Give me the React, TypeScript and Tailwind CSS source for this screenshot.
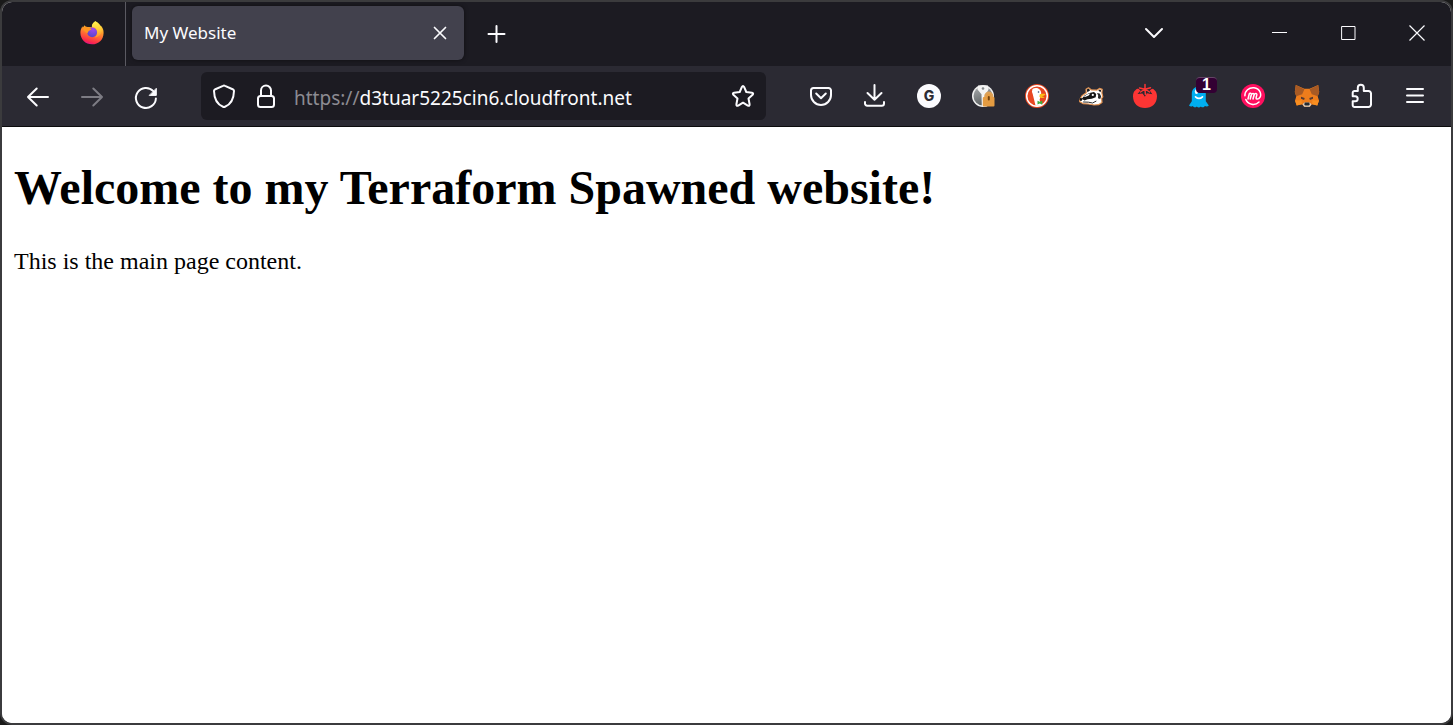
import { useState } from "react";
import type { ReactNode } from "react";

function Glyph({ children, className = "" }: { children: ReactNode; className?: string }) {
  return (
    <svg
      viewBox="0 0 32 32"
      aria-hidden="true"
      fill="none"
      stroke="currentColor"
      strokeWidth="2"
      strokeLinecap="round"
      strokeLinejoin="round"
      className={`size-8 shrink-0 ${className}`}
    >
      {children}
    </svg>
  );
}

function ToolButton({ label, disabled, children }: { label: string; disabled?: boolean; children: ReactNode }) {
  return (
    <button
      type="button"
      aria-label={label}
      disabled={disabled}
      className="relative flex h-12 w-[54px] shrink-0 items-center justify-center text-[#fbfbfe] disabled:text-[#7d7c84]"
    >
      {children}
    </button>
  );
}

function FirefoxLogo() {
  return (
    <Glyph>
      <defs>
        <linearGradient id="fx-body" x1="0.7" y1="0.05" x2="0.4" y2="1">
          <stop offset="0" stopColor="#ffe23e" />
          <stop offset="0.35" stopColor="#ffa22b" />
          <stop offset="0.65" stopColor="#ff5f36" />
          <stop offset="0.9" stopColor="#f9254f" />
          <stop offset="1" stopColor="#e01587" />
        </linearGradient>
        <linearGradient id="fx-flame" x1="0.4" y1="0" x2="0.5" y2="1">
          <stop offset="0" stopColor="#fff44f" />
          <stop offset="0.5" stopColor="#ffcf38" />
          <stop offset="1" stopColor="#ff8d2e" />
        </linearGradient>
        <radialGradient id="fx-globe" cx="0.6" cy="0.15" r="0.9">
          <stop offset="0" stopColor="#a048f0" />
          <stop offset="1" stopColor="#5047c8" />
        </radialGradient>
      </defs>
      <g stroke="none">
        <path
          d="M19.300 3.200c2.200 1.300 3.700 3 4.700 5l.8-.6c2 2.200 2.900 4.600 2.800 7.300C27.400 21.800 22.600 26.300 16 26.300S4.400 21.500 4.400 14.800c0-2.800.8-4.700 2.100-6.600l.3 1.500 1.800-2.500c.6 1.300 1.500 1.800 3 1.800l4.400.3c-.3-2.400 1-4.700 3.300-6.100Z"
          fill="url(#fx-body)"
        />
        <circle cx="16.200" cy="14.400" r="4.900" fill="url(#fx-globe)" />
        <path d="M19.300 3.200c-2.300 1.400-3.600 3.500-3.500 5.500 3.200.2 5 1.600 5.300 4.300.4 3-.7 5.200-2.600 6.600 4.500-.4 8.100-4.400 7.300-8.600-.8-3.600-3.200-6.300-6.500-7.800Z" fill="url(#fx-flame)" />
        <path d="M6.500 9.900c1.500-1.100 3.500-1.200 5.100-.9 1.200.6 2.600 1.500 3.900 1.800.2 1.400-1.800 1.500-2.600 2-.8.700-.5 1.800-1.500 2.200-2-.1-3.800-3.100-4.900-5.100Z" fill="#ff9620" />
      </g>
    </Glyph>
  );
}

function TabStrip() {
  return (
    <header className="flex h-16 items-stretch bg-[#1c1b22] text-[#fbfbfe]">
      <div className="ml-[57px] flex w-[67px] items-center justify-center border-r border-[#5b5a62]">
        <button type="button" aria-label="Pinned tab" className="flex">
          <FirefoxLogo />
        </button>
      </div>
      <div className="mt-1 ml-1.5 flex h-[54px] w-[332px] items-center rounded-md bg-[#42414d] pr-2 pl-3 shadow-[0_0_4px_rgba(0,0,0,0.5)]">
        <span className="flex-1 truncate text-[17px] leading-7">My Website</span>
        <button type="button" aria-label="Close tab" className="flex">
          <Glyph>
            <path d="M10.500 10.500l11 11m0-11l-11 11" strokeWidth="1.700" />
          </Glyph>
        </button>
      </div>
      <button type="button" aria-label="New tab" className="ml-4 flex items-center">
        <Glyph>
          <path d="M8.500 16h16m-8-8v16" />
        </Glyph>
      </button>
      <button type="button" aria-label="List all tabs" className="mr-[74px] ml-auto flex items-center">
        <Glyph>
          <path d="M8 11l8 8 8-8" />
        </Glyph>
      </button>
      <button type="button" aria-label="Minimize" className="flex w-[69px] items-center justify-center">
        <Glyph>
          <path d="M9 14.500h15" strokeWidth="1" strokeLinecap="butt" />
        </Glyph>
      </button>
      <button type="button" aria-label="Maximize" className="flex w-[69px] items-center justify-center">
        <Glyph>
          <path d="M10 8.500h13v13h-13z" strokeWidth="1" strokeLinejoin="miter" />
        </Glyph>
      </button>
      <button type="button" aria-label="Close window" className="flex w-[69px] items-center justify-center">
        <Glyph>
          <path d="M8.500 7.500l15 15m0-15l-15 15" strokeWidth="1.200" strokeLinecap="butt" />
        </Glyph>
      </button>
    </header>
  );
}

function AddressBar() {
  const [host, setHost] = useState("d3tuar5225cin6.cloudfront.net");
  return (
    <div className="mx-7 flex h-12 min-w-0 flex-1 items-center rounded-md bg-[#1c1b22] px-[7px] text-[#fbfbfe]">
      <button type="button" aria-label="Tracking protection" className="flex">
        <Glyph>
          <path d="M15 5.800q1-.5 2 0l8.200 3.700q.9.500.8 1.500C25.800 18.500 22.500 24.500 17 26.700q-1 .4-2 0C9.500 24.500 6.200 18.500 6 11q-.1-1 .8-1.500Z" />
        </Glyph>
      </button>
      <button type="button" aria-label="Site information" className="ml-2.5 flex">
        <Glyph>
          <rect x="8" y="16" width="16" height="11" rx="2.500" />
          <path d="M11 16v-5.500a5 5 0 0 1 10 0V16" />
        </Glyph>
      </button>
      <div className="ml-3 flex min-w-0 flex-1 items-center pt-1 text-[19px] leading-7">
        <label htmlFor="address" className="text-[#8c8b92]">
          https://
        </label>
        <input
          id="address"
          value={host}
          onChange={(e) => setHost(e.target.value)}
          className="min-w-0 flex-1 bg-transparent outline-none"
        />
      </div>
      <button type="button" aria-label="Bookmark this page" className="flex">
        <Glyph>
          <path d="M14.900 6.900Q16 4.900 17.100 6.900L19.300 12 24.900 12.700Q27 13.200 25.600 14.800L21.500 18.500 22.600 24.200Q22.800 26.400 20.800 25.600L16 22.700 11.200 25.600Q9.200 26.400 9.400 24.200L10.500 18.500 6.400 14.800Q5 13.200 7.100 12.700L12.700 12Z" />
        </Glyph>
      </button>
    </div>
  );
}

function Extensions() {
  return (
    <>
      <ToolButton label="Save to Pocket">
        <Glyph>
          <path d="M8.500 8h15a2.500 2.500 0 0 1 2.500 2.500V15a10 10 0 0 1-20 0v-4.500A2.500 2.500 0 0 1 8.500 8Z" />
          <path d="M11.200 13.500l4.800 4.700 4.800-4.700" />
        </Glyph>
      </ToolButton>
      <ToolButton label="Downloads">
        <Glyph>
          <path d="M15.500 5v14.500M8.500 13l7 6.800 7-6.800M6 22v1.500A2.200 2.200 0 0 0 8.200 25.700h14.600A2.200 2.200 0 0 0 25 23.500V22" />
        </Glyph>
      </ToolButton>
      <ToolButton label="Google account">
        <span className="flex size-6 items-center justify-center rounded-full bg-[#fbfbfe] font-['Inter',sans-serif] text-sm font-extrabold text-[#2b2a33]">
          G
        </span>
      </ToolButton>
      <ToolButton label="Password keeper">
        <Glyph>
          <defs>
            <linearGradient id="key-disc" x1="0" y1="0" x2="0.3" y2="1">
              <stop offset="0" stopColor="#a9acae" />
              <stop offset="1" stopColor="#5f6365" />
            </linearGradient>
          </defs>
          <g stroke="none">
            <circle cx="16" cy="16" r="11" fill="#f0f0f0" />
            <circle cx="16" cy="16" r="9.500" fill="url(#key-disc)" />
            <path d="M11 5.500h10l.5 4-2.500 4.700.8 12.300h-5l-.3-12.300L10.500 9.500Z" fill="#f4f4f4" />
            <circle cx="16" cy="8.500" r="1.300" fill="#85898b" />
          </g>
          <path d="M18.300 18.500v-2.300a3.500 3.500 0 0 1 7 0v2.300" fill="#e59c42" stroke="#dca057" strokeWidth="2.200" />
          <rect x="15.800" y="17" width="11.700" height="9.500" rx="1" fill="#e59c42" stroke="none" />
          <path d="M21.800 17v2.500" stroke="#74430f" strokeWidth="2" />
        </Glyph>
      </ToolButton>
      <ToolButton label="DuckDuckGo">
        <Glyph>
          <g stroke="none">
            <circle cx="16" cy="16" r="12" fill="#e84722" />
            <circle cx="16" cy="16" r="10.300" fill="none" stroke="#fff" strokeWidth="1.500" />
            <path d="M11.500 9c2-1.700 6-1.500 7.600.9 1.200 1.600 1.200 3.100 1 4.600l-1.500 5.200 1.600 5.200a9.600 9.600 0 0 1-5.700.5L11.700 14l-.8-2.200Z" fill="#fff" />
            <path d="M18.800 14.200c2-.3 4.500-.6 5.700 0-.4 1.400-3 1.600-3.300 2.200.7.400 2.200.3 2.500.6-.8 1.700-4.600 1.200-5.300-.5Z" fill="#fdbb16" />
            <path d="M16.500 20.800l2.200 1 2.600-1v3.700l-2.600-.9-2.200.8Z" fill="#3fae3f" />
            <circle cx="17.500" cy="12" r=".8" fill="#26466d" />
          </g>
        </Glyph>
      </ToolButton>
      <ToolButton label="Privacy Badger">
        <Glyph>
          <path
            d="M4.500 20L7 15.800l4.300-3L11 9.200l2.500-1.400 2.700 2 5.800.3 2.500-1.700 2.700 1-.3 3.500.9 4-1.200 1.500.4 4.100-3.500 2.200-4.500.3-5.500-1-5.500-.4-3.200-1.800Z"
            fill="#fff"
            stroke="#e69350"
            strokeWidth="1.200"
          />
          <g stroke="none">
            <path d="M11.800 9.400l1.700-.8 1.700 1.600-2.800 2.100ZM23.300 10.600l1.500-1.100 1.300.8-.6 2Z" fill="#171717" />
            <path d="M6.800 18.800l2.700-3.200 5-2.700 4.500-1 2.200 2-.5 3.300-4 1.600-4.200.4-3 1.300Z" fill="#151515" />
            <path d="M8.500 17l3.500-2.400 3.500-1.300-1.800 2.200-3 1.200Z" fill="#fff" />
            <circle cx="17.800" cy="14.900" r="1.100" fill="#fff" />
            <path d="M22 13l2.700.5 1.500 3-1 2.500-2.300-.8.3-2.600Z" fill="#2b2b2b" />
            <circle cx="5.900" cy="19.500" r="1.400" fill="#111" />
          </g>
          <path d="M8.500 22l5 .2 4 .8 3.500-1.800" stroke="#2b2b2b" strokeWidth="1" />
        </Glyph>
      </ToolButton>
      <ToolButton label="Tomato timer">
        <Glyph>
          <path d="M16 8c7.300-1.500 12 2.300 12 8.200C28 23.500 22.800 28 16 28S4 23.500 4 16.200C4 10.300 8.700 6.500 16 8Z" fill="#fd3534" stroke="none" />
          <path d="M8 7.500l3.500 3-3 3.500 5-.5 2.400 3.300 2-3.500 5.500 1-2.700-3.700 3.300-2.600-5-1.200-3-1-3 1Z" fill="#2b2a33" stroke="none" />
          <path d="M16 4.500v4M10.500 8l5.500 1.200 5.500-1.500M11.500 12L16 9l.4 5.500M16 9l4.500 3" stroke="#fd3534" strokeWidth="1.500" />
        </Glyph>
      </ToolButton>
      <ToolButton label="Ghostery">
        <Glyph>
          <path d="M16 6.500c4.300 0 6.800 2.900 6.800 7.200v7.500l3 4.300c-1.300 1.400-3 .9-3.900.4-.9 1.600-2.700 1.900-4 .5-1.300 1.300-2.900 1.300-4.100 0-1.300 1.400-3.100 1.100-4-.5-1.200.8-2.600.8-3.800-.3l2.800-4.400v-7.500c0-4.300 2.900-7.200 7.200-7.200Z" fill="#00aef0" stroke="none" />
          <ellipse cx="13.500" cy="11.500" rx="1.700" ry="2.500" fill="#fff" stroke="none" />
          <path d="M12.500 16.800q3.500 3.200 7 0" stroke="#fff" strokeWidth="1.600" />
        </Glyph>
        <span className="absolute top-[5px] left-6 flex h-4 w-[21px] items-center justify-center rounded-sm border-t border-[#654567] bg-[#330033] pb-0.5 font-['Liberation_Sans',sans-serif] text-base leading-none font-bold text-white">
          1
        </span>
      </ToolButton>
      <ToolButton label="Mailvelope">
        <Glyph>
          <circle cx="16" cy="16" r="12" fill="#ff0f5f" stroke="none" />
          <path
            d="M11 19l1.300-5.200c.3-1 2.300-.8 2 .6L13.200 19l1.200-4.200c.6-1.700 2.900-1.600 2.600.1L16 19l1.200-4.200c.6-1.700 2.900-1.600 2.600.1l-.7 2.900c-.3 1.500 1.500 1.500 2.600.9 4-3.200 1.500-10.400-4.700-11-5-.5-9.300 3.200-9.100 8.100M8.800 19.500C11 24.800 18 26 22 22"
            stroke="#fff"
            strokeWidth="1.500"
          />
        </Glyph>
      </ToolButton>
      <ToolButton label="MetaMask">
        <Glyph>
          <g stroke="none">
            <path d="M4.800 5l8.600 3.700h5.200L27.200 5l1 7-1.500 4.500 1.300 4-1.700 5-5.300-1.300-2.200 2.500h-5.600L11 24.200l-5.300 1.300-1.700-5 1.300-4L3.800 12Z" fill="#ee7d1c" />
            <path d="M4.800 5l8.600 4.300-2.200 5-6 2-1.400-4.300ZM27.200 5l-8.600 4.300 2.200 5 6 2 1.400-4.300Z" fill="#a85a24" />
            <path d="M10 16.800l3.700 1.300-.6 1.900-3.100-1.200ZM22 16.800l-3.700 1.300.6 1.900 3.100-1.200Z" fill="#553a31" />
            <path d="M11.500 24.200l2-1.700h5l2 1.700-1.700 2.500h-5.600Z" fill="#d9cbbd" />
            <path d="M13.700 22.500h4.600l.4 2.300-1 .7h-3.400l-1-.7Z" fill="#242b32" />
            <path d="M4 20.500l6.500-.3.500 4-5.300 1.300ZM28 20.500l-6.500-.3-.5 4 5.300 1.300Z" fill="#f98e20" />
          </g>
        </Glyph>
      </ToolButton>
      <ToolButton label="Extensions">
        <Glyph>
          <path d="M9.500 11h3.300V7.700a3 3 0 0 1 6 0V11h4.700A2.500 2.500 0 0 1 26 13.500v11A2.500 2.500 0 0 1 23.500 27h-14A1.800 1.800 0 0 1 7.700 25.200v-4h2.500a2.500 2.500 0 0 0 0-5H7.700v-3.400A1.800 1.800 0 0 1 9.500 11Z" />
        </Glyph>
      </ToolButton>
      <ToolButton label="Open application menu">
        <Glyph>
          <path d="M8 9h16M8 15.500h16M8 22h16" />
        </Glyph>
      </ToolButton>
    </>
  );
}

function NavigationBar() {
  return (
    <nav aria-label="Navigation" className="flex h-[61px] items-center border-b border-[#0c0c0d] bg-[#2b2a33] px-[9px]">
      <ToolButton label="Back">
        <Glyph>
          <path d="M26 17H6m8.700-8.500L6 17l8.700 8.500" />
        </Glyph>
      </ToolButton>
      <ToolButton label="Forward" disabled>
        <Glyph>
          <path d="M6 17h20m-8.700-8.500L26 17l-8.700 8.500" />
        </Glyph>
      </ToolButton>
      <ToolButton label="Reload">
        <Glyph>
          <path d="M25.900 18.500A10 10 0 1 1 23.300 11.200" />
          <path d="M26.300 8.700v6.700h-6.700Z" fill="currentColor" strokeWidth="1" />
        </Glyph>
      </ToolButton>
      <AddressBar />
      <Extensions />
    </nav>
  );
}

export default function App() {
  return (
    <div className="flex min-h-screen bg-[#1a1a1a]">
      <div className="flex flex-1 flex-col overflow-hidden rounded-xl border-2 border-[#3b3b3d] bg-white font-['Noto_Sans',sans-serif]">
        <TabStrip />
        <NavigationBar />
        <main className="flex-1 bg-white px-3 py-8 font-['Liberation_Serif',serif] text-black">
          <h1 className="text-5xl leading-[58px] font-bold">Welcome to my Terraform Spawned website!</h1>
          <p className="mt-[30px] text-2xl leading-7">This is the main page content.</p>
        </main>
      </div>
    </div>
  );
}
